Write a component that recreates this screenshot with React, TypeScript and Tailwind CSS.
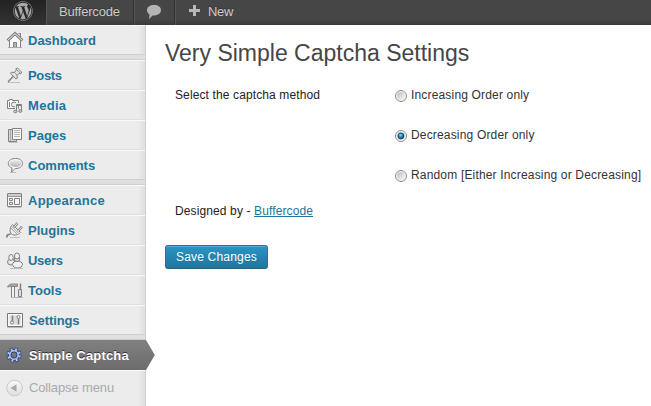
import type { ReactNode } from "react";
import { FaWordpress } from "react-icons/fa";

function Icon({ children }: { children: ReactNode }) {
  return (
    <svg
      className="h-[30px] w-7 shrink-0"
      viewBox="0 0 28 30"
      fill="none"
      stroke="#808080"
      strokeWidth="1"
    >
      {children}
    </svg>
  );
}

const icons: Record<string, ReactNode> = {
  Dashboard: (
    <Icon>
      <path d="M9.500 15v7.500h11V15L15 10z" fill="#f7f7f7" />
      <path d="M18.500 8.500h2v4" fill="#ddd" />
      <path d="M7.500 15.500L15 8.500l7.500 7" stroke="#808080" strokeWidth="2.800" />
      <path d="M7.800 15.300L15 8.700l7.200 6.600" stroke="#f1f1f1" strokeWidth="1" />
      <path d="M13.500 22.500v-5h3v5" fill="#b5b5b5" />
      <path d="M8 22.500h14" stroke="#aaa" />
    </Icon>
  ),
  Posts: (
    <Icon>
      <path d="M8 22.500h12" stroke="#c0c0c0" />
      <path d="M8 22l5-5.500" strokeWidth="1.400" />
      <path
        d="M16 8.500l1.500-.5 4 4-.5 1.800-2-.3-2 2 .3 2.700-1.300.8-5.500-5.500.8-1.300 2.700.3 2.200-2z"
        fill="#e2e2e2"
      />
      <path d="M16 9l4.500 4.500M14 12l3.500 3.500" stroke="#999" />
    </Icon>
  ),
  Media: (
    <Icon>
      <path d="M7.500 10.500h2v-1h3v1h6v8h-11z" fill="#f8f8f8" />
      <circle cx="14" cy="14.500" r="2.500" fill="#eee" />
      <path d="M9.500 12v5" />
      <path d="M16.500 21.500v-7h5v6" stroke="#ebebeb" strokeWidth="3" />
      <path d="M16.500 21.500v-7h5v6M16.500 15.500h5" />
      <ellipse cx="15.300" cy="21.500" rx="1.600" ry="1.300" fill="#ccc" />
      <ellipse cx="20.300" cy="21" rx="1.600" ry="1.300" fill="#ccc" />
    </Icon>
  ),
  Pages: (
    <Icon>
      <path d="M12.500 9.500h-4v12h8v-2" fill="#d8d8d8" />
      <path d="M10.500 10v11" stroke="#aaa" />
      <path d="M12.500 8.500h9v11h-9z" fill="#f7f7f7" />
      <path d="M14 10.500h6M14 12.500h6M14 14.500h6M14 16.500h6" stroke="#b5b5b5" />
      <path d="M9 22.500h9" stroke="#c4c4c4" />
    </Icon>
  ),
  Comments: (
    <Icon>
      <defs>
        <linearGradient id="speech" x1="0" y1="0" x2="0" y2="1">
          <stop stopColor="#ececec" />
          <stop offset="1" stopColor="#b4b4b4" />
        </linearGradient>
      </defs>
      <path
        d="M15.500 8.500c4.200 0 7 2 7 5s-2.800 5-7 5h-.5l-3.500 3.700.5-4.200c-2.300-.8-3.700-2.500-3.700-4.500 0-3 3-5 7.200-5z"
        fill="#f8f8f8"
      />
      <ellipse cx="15.500" cy="13.500" rx="5.800" ry="3.600" fill="url(#speech)" stroke="none" />
      <path d="M10 22.500h6" stroke="#bbb" />
    </Icon>
  ),
  Appearance: (
    <Icon>
      <rect x="7.500" y="8.500" width="14" height="13" rx="0.500" fill="#f6f6f6" />
      <path d="M8 9h13v2H8z" fill="#ccc" stroke="none" />
      <path d="M8 11.500h13" stroke="#999" />
      <path d="M9.500 13.500h3v2h-3zM9.500 17.500h3v2h-3zM14.500 13.500h5v6h-5z" />
      <path d="M7.500 22.500h14" stroke="#c4c4c4" />
    </Icon>
  ),
  Plugins: (
    <Icon>
      <path d="M6.500 22.500l1-2.500 3-1" strokeWidth="1.800" />
      <path d="M10 22.500h10" stroke="#c0c0c0" />
      <path
        d="M12.500 9.500l8 8c-2.500 2.500-6 3.500-9 1.500-2.500-2.500-1.500-7 1-9.500z"
        fill="#f0f0f0"
      />
      <path d="M10.800 13l6 6M11.800 11.500l6.500 6.500" stroke="#a0a0a0" />
      <path d="M14 12.500L17.500 8M18 16l4-4.500" strokeWidth="2.600" />
      <path d="M14 12.500L17.500 8M18 16l4-4.500" stroke="#f8f8f8" strokeWidth="0.900" />
    </Icon>
  ),
  Users: (
    <Icon>
      <ellipse cx="11" cy="17" rx="3.500" ry="3" fill="#e8e8e8" />
      <ellipse cx="11" cy="12.500" rx="2.200" ry="3" fill="#f5f5f5" />
      <ellipse cx="17.500" cy="19.500" rx="5" ry="3.500" fill="#f1f1f1" />
      <ellipse cx="17" cy="14" rx="2.800" ry="2.500" fill="#ddd" />
      <ellipse cx="17" cy="11" rx="2.500" ry="3" fill="#f5f5f5" />
      <path d="M10 23.500h13" stroke="#bbb" />
    </Icon>
  ),
  Tools: (
    <Icon>
      <path d="M7.500 12c1-2.500 3-3 4.500-3h5.500v2.500h-6c-2 0-3 .3-4 .5z" fill="#aaa" stroke="#8a8a8a" />
      <path d="M11.500 11.500h3v11h-3z" fill="#f4f4f4" />
      <path d="M20.500 8.500v6" strokeWidth="1.500" />
      <path d="M18.500 14.500h3v7h-3z" fill="#ddd" />
      <path d="M11 22.500h12" stroke="#b4b4b4" />
    </Icon>
  ),
  Settings: (
    <Icon>
      <path d="M7.500 8.500h15v13h-15z" fill="#f8f8f8" stroke="#777" />
      <path d="M9.500 10.500h11v9h-11z" fill="#ddd" stroke="none" />
      <path d="M12.500 10.500v6M18.500 13.500v6" strokeWidth="1.500" />
      <circle cx="12" cy="17.500" r="1.500" fill="#f4f4f4" />
      <circle cx="18.500" cy="12" r="1.500" fill="#f4f4f4" />
      <path d="M7 22.500h16" stroke="#bbb" />
    </Icon>
  ),
};

const groups = [
  [{ name: "Dashboard", text: "" }],
  [
    { name: "Posts", text: "tracking-[-0.35px]" },
    { name: "Media", text: "tracking-[0.3px]" },
    { name: "Pages", text: "" },
    { name: "Comments", text: "" },
  ],
  [
    { name: "Appearance", text: "tracking-[0.25px]" },
    { name: "Plugins", text: "" },
    { name: "Users", text: "tracking-[-0.3px]" },
    { name: "Tools", text: "" },
    { name: "Settings", text: "pl-px tracking-[-0.1px]" },
  ],
];

function Sidebar() {
  return (
    <aside className="flex w-[146px] shrink-0 flex-col border-r border-[#d0d0d0] bg-[linear-gradient(to_right,#ececec_138px,#dfdfdf_145px)] text-[13px]">
      {groups.map((group) => (
        <div key={group[0].name}>
          {group.map((item) => (
            <a
              key={item.name}
              className="flex h-[30px] items-center border-t border-b border-t-[#f9f9f9] border-b-[#dfdfdf] font-bold text-[#21759b]"
            >
              {icons[item.name]}
              <span className={`pt-[2px] ${item.text}`}>{item.name}</span>
            </a>
          ))}
          <div className="-mt-px h-[6px] border-t border-b border-t-[#cfcfcf] border-b-[#cfcfcf] bg-[#dfdfdf]" />
        </div>
      ))}
      <div className="relative flex h-[30px] w-[146px] shrink-0 items-center bg-linear-to-b from-[#808080] to-[#6c6c6c] font-bold tracking-[0.16px] text-white [text-shadow:0_-1px_0_#333]">
        <svg className="h-[30px] w-[29px] shrink-0" viewBox="0 0 29 30" fill="none">
          <circle cx="14" cy="15" r="5.600" stroke="#2f4275" strokeWidth="4" strokeDasharray="2.800 1.598" />
          <circle cx="14" cy="15" r="4.200" stroke="#2f4275" strokeWidth="3.400" />
          <circle cx="14" cy="15" r="5.600" stroke="#b5c8f5" strokeWidth="2.400" strokeDasharray="1.800 2.598" strokeDashoffset="-0.500" />
          <circle cx="14" cy="15" r="4.200" stroke="#a9bff0" strokeWidth="1.600" />
        </svg>
        <span className="pt-[2px] whitespace-nowrap">Simple Captcha</span>
        <svg className="absolute top-0 left-[146px] h-[30px] w-[9px]" viewBox="0 0 9 30">
          <defs>
            <linearGradient id="arrow" x1="0" y1="0" x2="0" y2="1">
              <stop stopColor="#808080" />
              <stop offset="1" stopColor="#6c6c6c" />
            </linearGradient>
          </defs>
          <path d="M0 0L8.800 15 0 30z" fill="url(#arrow)" />
        </svg>
      </div>
      <div className="flex h-[34px] items-center border-t border-[#f9f9f9] text-[#aaa]">
        <svg className="h-[18px] w-[29px] shrink-0" viewBox="0 0 29 18">
          <defs>
            <linearGradient id="knob" x1="0" y1="0" x2="0" y2="1">
              <stop stopColor="#fafafa" />
              <stop offset="1" stopColor="#dedede" />
            </linearGradient>
          </defs>
          <circle cx="14.500" cy="9" r="7.800" fill="url(#knob)" stroke="#c8c8c8" />
          <path d="M10.500 9l6-3.700v7.400z" fill="#aaa" />
        </svg>
        <span className="tracking-[-0.13px]">Collapse menu</span>
      </div>
    </aside>
  );
}

function AdminBar() {
  return (
    <header className="flex h-[25px] bg-[linear-gradient(to_bottom,#464646_19px,#3a3a3a_25px)] text-[13px] leading-[23px] text-[#ccc] [text-shadow:0_-1px_0_#333]">
      <div className="flex w-[46px] justify-center bg-linear-to-b from-[#222] to-[#333] pt-px text-[#aaa]">
        <FaWordpress className="size-[20px]" />
      </div>
      <div className="w-[88px] border-r border-l border-r-[#333] border-l-[#555] pl-3 tracking-[-0.18px]">
        Buffercode
      </div>
      <div className="w-[41px] border-r border-l border-r-[#333] border-l-[#555]">
        <svg className="h-[24px] w-[39px]" viewBox="0 0 39 24">
          <path
            d="M19 5c4.200 0 7 2 7 5s-3 5.500-7 5.500h-1.500L14 19l.5-4.600c-1.800-.9-2.500-2.600-2.500-4.400 0-3 3-5 7-5z"
            fill="#b4b4b4"
          />
        </svg>
      </div>
      <div className="flex border-l border-[#555] pl-[13px]">
        <svg className="mt-[5px] h-[12px] w-[11px]" viewBox="0 0 11 12">
          <path d="M5.500 0v11M0 5.500h11" stroke="#b8b8b8" strokeWidth="3" />
        </svg>
        <span className="pl-[8px] tracking-[-0.3px]">New</span>
      </div>
    </header>
  );
}

function Radio({ label, checked = false }: { label: string; checked?: boolean }) {
  return (
    <label className="flex h-[40px] items-start whitespace-nowrap text-[#333]">
      <svg className="mt-[5px] h-[12px] w-[16px] shrink-0" viewBox="0 0 16 12">
        <defs>
          <linearGradient id="well" x1="0" y1="0" x2="1" y2="1">
            <stop stopColor="#bcbcbc" />
            <stop offset="1" stopColor="#fafafa" />
          </linearGradient>
          <radialGradient id="dot" cx="0.400" cy="0.350" r="0.700">
            <stop stopColor="#9de5fa" />
            <stop offset="0.400" stopColor="#279ac5" />
            <stop offset="1" stopColor="#0b3b60" />
          </radialGradient>
        </defs>
        <circle cx="6" cy="6" r="5.500" fill="#f6f6f6" stroke="#8b8d8f" />
        <circle cx="6" cy="6" r="4" fill="url(#well)" />
        {checked && <circle cx="6" cy="6" r="3" fill="url(#dot)" stroke="#173b58" strokeWidth="0.800" />}
      </svg>
      <span className="leading-[20px] tracking-[0.17px]">{label}</span>
    </label>
  );
}

export default function App() {
  return (
    <div className="flex h-[406px] w-[651px] flex-col overflow-hidden bg-white font-['Liberation_Sans',Arial,sans-serif]">
      <AdminBar />
      <div className="flex min-h-0 flex-1">
        <Sidebar />
        <main className="flex-1 pl-[19px] text-[12px] text-[#222]">
          <h1 className="pt-[13px] text-[23px] leading-[30px] text-[#464646]">
            Very Simple Captcha Settings
          </h1>
          <div className="flex pt-[17px] pl-[10px]">
            <div className="w-[220px] leading-[20px] tracking-[0.12px]">Select the captcha method</div>
            <div>
              <Radio label="Increasing Order only" />
              <Radio label="Decreasing Order only" checked />
              <Radio label="Random [Either Increasing or Decreasing]" />
            </div>
          </div>
          <p className="-mt-[4px] pl-[10px] leading-[20px] tracking-[0.12px]">
            Designed by - <a className="text-[#21759b] underline">Buffercode</a>
          </p>
          <button className="mt-[24px] block h-[24px] w-[103px] rounded-[3px] border border-[#21759b] border-b-[#1e6a8d] bg-linear-to-b from-[#2a95c5] to-[#21759b] leading-[22px] tracking-[0.2px] text-white shadow-[inset_0_1px_0_rgba(120,200,230,0.5)] [text-shadow:0_1px_0_rgba(0,0,0,0.1)]">
            Save Changes
          </button>
        </main>
      </div>
    </div>
  );
}
